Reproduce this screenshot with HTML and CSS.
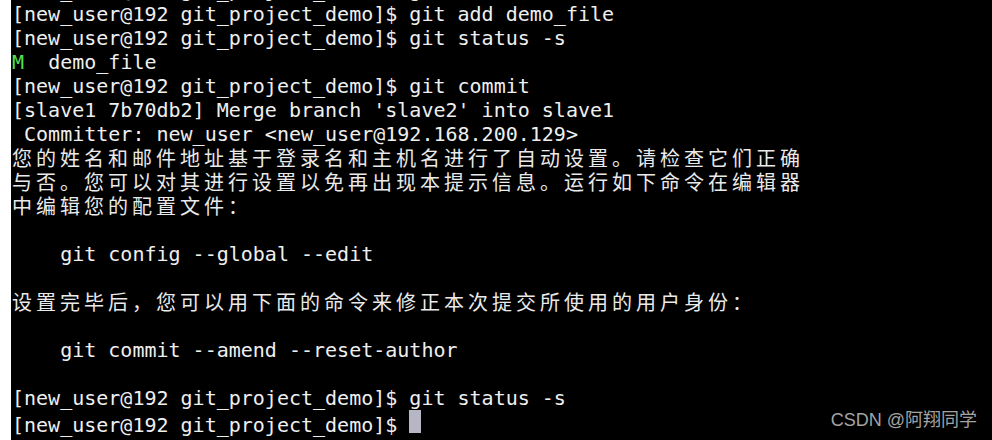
FILE: index.html
```html
<!DOCTYPE html>
<html lang="zh-CN">
<head>
<meta charset="utf-8">
<title>terminal</title>
<link rel="stylesheet" href="styles.css">
</head>
<body>
<div class="screen">
  <div class="gutter"></div>
  <div class="term">
    <div class="row">[new_user@192 git_project_demo]$ git status</div>
    <div class="row">[new_user@192 git_project_demo]$ git add demo_file</div>
    <div class="row">[new_user@192 git_project_demo]$ git status -s</div>
    <div class="row"><span class="green">M</span>  demo_file</div>
    <div class="row">[new_user@192 git_project_demo]$ git commit</div>
    <div class="row">[slave1 7b70db2] Merge branch 'slave2' into slave1</div>
    <div class="row"> Committer: new_user &lt;new_user@192.168.200.129&gt;</div>
    <div class="row cjk">您的姓名和邮件地址基于登录名和主机名进行了自动设置。请检查它们正确</div>
    <div class="row cjk">与否。您可以对其进行设置以免再出现本提示信息。运行如下命令在编辑器</div>
    <div class="row cjk">中编辑您的配置文件：</div>
    <div class="row"></div>
    <div class="row">    git config --global --edit</div>
    <div class="row"></div>
    <div class="row cjk">设置完毕后，您可以用下面的命令来修正本次提交所使用的用户身份：</div>
    <div class="row"></div>
    <div class="row">    git commit --amend --reset-author</div>
    <div class="row"></div>
    <div class="row">[new_user@192 git_project_demo]$ git status -s</div>
    <div class="row">[new_user@192 git_project_demo]$ <span class="cursor"></span></div>
  </div>
  <div class="watermark">CSDN @阿翔同学</div>
</div>
</body>
</html>
```

FILE: styles.css
```css
html, body {
  margin: 0;
  padding: 0;
  background: #000;
}

.screen {
  position: relative;
  width: 992px;
  height: 440px;
  overflow: hidden;
  display: flex;
  background: #000;
}

.gutter {
  flex: 0 0 11px;
  background: #ffffff;
}

.term {
  flex: 1 1 auto;
  margin-top: -22px;
  padding-left: 1px;
  font-family: "DejaVu Sans Mono", "Noto Sans CJK SC", monospace;
  font-size: 20px;
  color: #efefef;
}

.row {
  height: 24px;
  line-height: 24px;
  white-space: pre;
}

.row.cjk {
  font-family: "Noto Sans CJK SC", "DejaVu Sans Mono", sans-serif;
  font-size: 20px;
  letter-spacing: 4px;
  line-height: 16px;
  padding-top: 4px;
  height: 20px;
  color: #eaeaea;
}

.green {
  color: #4fe04f;
}

.cursor {
  display: inline-block;
  width: 12px;
  height: 23px;
  vertical-align: -1px;
  background: #b6b6c4;
}

.watermark {
  position: absolute;
  right: 15px;
  bottom: 11px;
  font-family: "Liberation Sans", "Noto Sans CJK SC", sans-serif;
  font-size: 18px;
  line-height: 18px;
  color: #a3a3a3;
}
```
